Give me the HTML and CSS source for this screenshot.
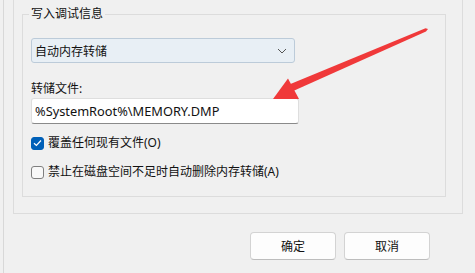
FILE: index.html
```html
<!DOCTYPE html>
<html lang="zh-CN">
<head>
<meta charset="utf-8">
<link rel="stylesheet" href="styles.css">
</head>
<body>
<div class="window">
  <div class="tabpage">
    <div class="group">
      <div class="group-title">写入调试信息</div>
      <div class="combo">
        <span>自动内存转储</span>
        <svg class="chev" width="10" height="6" viewBox="0 0 10 6"><path d="M1 1 L5 5 L9 1" fill="none" stroke="#555" stroke-width="1"/></svg>
      </div>
      <div class="label">转储文件:</div>
      <div class="textbox">%SystemRoot%\MEMORY.DMP</div>
      <div class="check-row first">
        <span class="box checked"><svg width="9" height="8" viewBox="0 0 9 8"><path d="M1 4.2 L3.4 6.5 L8 1.5" fill="none" stroke="#fff" stroke-width="1.2"/></svg></span>
        <span>覆盖任何现有文件(O)</span>
      </div>
      <div class="check-row second">
        <span class="box"></span>
        <span>禁止在磁盘空间不足时自动删除内存转储(A)</span>
      </div>
    </div>
  </div>
  <div class="buttons">
    <div class="btn">确定</div>
    <div class="btn">取消</div>
  </div>
  <svg class="arrow" width="475" height="273" viewBox="0 0 475 273">
    <polygon fill="#f0393a" points="428,29 426,31.5 287.6,93.4 284.4,86.6 425.5,28.2"/>
    <polygon fill="#f0393a" points="273,99 288,78.5 299,99"/>
  </svg>
</div>
</body>
</html>
```
FILE: styles.css
```css
html, body {
  margin: 0;
  padding: 0;
}
body {
  width: 475px;
  height: 273px;
  background: #f0f0f0;
  font-family: "Noto Sans", "Noto Sans CJK SC", sans-serif;
  font-size: 12px;
  color: #111111;
  overflow: hidden;
}
.window {
  position: relative;
  margin-left: 3px;
  height: 273px;
  border-left: 1px solid #d8d8d8;
  box-sizing: border-box;
}
.tabpage {
  margin-left: 9px;
  width: 450px;
  height: 214px;
  box-sizing: border-box;
  border: 1px solid #dcdcdc;
  border-top: none;
  padding: 14px 0 0 8px;
}
.group {
  position: relative;
  width: 424px;
  height: 183px;
  box-sizing: border-box;
  border: 1px solid #dcdcdc;
  padding: 23px 0 0 8px;
}
.group-title {
  position: absolute;
  left: 6px;
  top: -9px;
  padding: 0 2px;
  line-height: 16px;
  background: #f0f0f0;
}
.combo {
  width: 264px;
  height: 25px;
  box-sizing: border-box;
  border: 1px solid #bccbd9;
  border-radius: 3px;
  background: #e8eff5;
  display: flex;
  align-items: center;
  justify-content: space-between;
  padding: 0 7px 0 3px;
}
.chev {
  display: block;
}
.label {
  margin-top: 18px;
  line-height: 16px;
}
.textbox {
  margin-top: 1px;
  width: 268px;
  height: 26px;
  box-sizing: border-box;
  background: #ffffff;
  border: 1px solid #dedede;
  border-bottom-color: #8a8a8a;
  border-radius: 3px;
  padding: 0 3px;
  display: flex;
  align-items: center;
  font-size: 12.8px;
}
.check-row {
  display: flex;
  align-items: center;
  gap: 4px;
  line-height: 16px;
}
.check-row.first {
  margin-top: 11px;
}
.check-row.second {
  margin-top: 13px;
}
.box {
  width: 13px;
  height: 13px;
  box-sizing: border-box;
  border: 1px solid #7f7f7f;
  border-radius: 3px;
  background: #f8f8f8;
  display: flex;
  align-items: center;
  justify-content: center;
}
.box.checked {
  background: #0060b8;
  border-color: #0060b8;
}
.buttons {
  display: flex;
  justify-content: flex-end;
  gap: 8px;
  margin-top: 18px;
  margin-right: 45px;
}
.btn {
  width: 86px;
  height: 28px;
  box-sizing: border-box;
  border: 1px solid #d3d3d3;
  border-bottom-color: #bdbdbd;
  border-radius: 4px;
  background: #fdfdfd;
  display: flex;
  align-items: center;
  justify-content: center;
}
.arrow {
  position: absolute;
  left: -4px;
  top: 0;
}
```
